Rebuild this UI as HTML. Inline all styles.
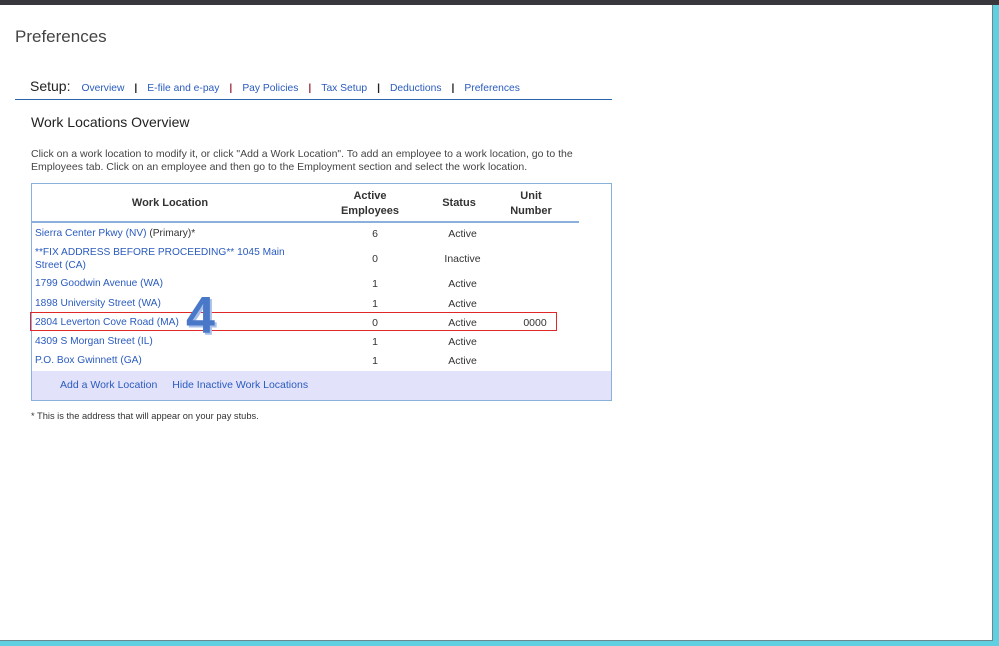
<!DOCTYPE html>
<html><head><style>
body{margin:0;width:999px;height:646px;position:relative;background:#5fd0e0;font-family:"Liberation Sans",sans-serif;overflow:hidden}
#top{position:absolute;left:0;top:0;width:999px;height:5px;background:#38383c}
#page{position:absolute;left:0;top:5px;width:992px;height:635px;background:#fff;border-right:1px solid #6a8890;border-bottom:1px solid #6a8890}
.a{position:absolute;white-space:nowrap}
.lk{color:#2a5bbf}
.sep{color:#222;font-weight:bold;margin:0 10px}
.c{position:absolute;text-align:center;font-size:10.5px;color:#333}
.r{font-size:10.2px}
</style></head><body>
<div id="top"></div>
<div id="page">
<div class="a" style="left:15px;top:22px;font-size:17px;color:#444">Preferences</div>
<div class="a" style="left:30px;top:73px;font-size:10.3px"><span style="font-size:14px;color:#222;margin-right:11px">Setup:</span><span class="lk">Overview</span><span class="sep">|</span><span class="lk">E-file and e-pay</span><span class="sep" style="color:#a03040">|</span><span class="lk">Pay Policies</span><span class="sep" style="color:#a03040">|</span><span class="lk">Tax Setup</span><span class="sep">|</span><span class="lk">Deductions</span><span class="sep">|</span><span class="lk">Preferences</span></div>
<div class="a" style="left:15px;top:94px;width:597px;height:1px;background:#2a64a8"></div>
<div class="a" style="left:31px;top:109px;font-size:14px;color:#222">Work Locations Overview</div>
<div class="a" style="left:31px;top:143px;font-size:10.5px;color:#444;line-height:13px">Click on a work location to modify it, or click "Add a Work Location". To add an employee to a work location, go to the<br>Employees tab. Click on an employee and then go to the Employment section and select the work location.</div>
<div class="a" style="left:31px;top:178px;width:579px;height:216px;border:1px solid #8ab0dc"></div>
<div class="a" style="left:32px;top:216px;width:547px;height:2px;background:#8ab0dc"></div>
<div class="c" style="left:90px;width:160px;top:192px;font-size:11px;font-weight:bold">Work Location</div>
<div class="c" style="left:320px;width:100px;top:184px;font-size:11px;font-weight:bold;line-height:15px">Active<br>Employees</div>
<div class="c" style="left:420px;width:78px;top:192px;font-size:11px;font-weight:bold">Status</div>
<div class="c" style="left:495px;width:72px;top:184px;font-size:11px;font-weight:bold;line-height:15px">Unit<br>Number</div>
<div class="a" style="left:31px;top:308px;width:525px;height:17px;outline:1px solid #e02828"></div>
<div class="a lk r" style="left:35px;top:223px">Sierra Center Pkwy (NV) <span style="color:#333">(Primary)*</span></div>
<div class="a lk r" style="left:35px;top:241px;line-height:13px">**FIX ADDRESS BEFORE PROCEEDING** 1045 Main<br>Street (CA)</div>
<div class="a lk r" style="left:35px;top:273px">1799 Goodwin Avenue (WA)</div>
<div class="a lk r" style="left:35px;top:293px">1898 University Street (WA)</div>
<div class="a lk r" style="left:35px;top:312px">2804 Leverton Cove Road (MA)</div>
<div class="a lk r" style="left:35px;top:331px">4309 S Morgan Street (IL)</div>
<div class="a lk r" style="left:35px;top:350px">P.O. Box Gwinnett (GA)</div>
<div class="c" style="left:355px;width:40px;top:223px">6</div>
<div class="c" style="left:355px;width:40px;top:248px">0</div>
<div class="c" style="left:355px;width:40px;top:273px">1</div>
<div class="c" style="left:355px;width:40px;top:293px">1</div>
<div class="c" style="left:355px;width:40px;top:312px">0</div>
<div class="c" style="left:355px;width:40px;top:331px">1</div>
<div class="c" style="left:355px;width:40px;top:350px">1</div>
<div class="c" style="left:425px;width:75px;top:223px">Active</div>
<div class="c" style="left:425px;width:75px;top:248px">Inactive</div>
<div class="c" style="left:425px;width:75px;top:273px">Active</div>
<div class="c" style="left:425px;width:75px;top:293px">Active</div>
<div class="c" style="left:425px;width:75px;top:312px">Active</div>
<div class="c" style="left:425px;width:75px;top:331px">Active</div>
<div class="c" style="left:425px;width:75px;top:350px">Active</div>
<div class="c" style="left:505px;width:60px;top:312px">0000</div>
<div class="a" style="left:186px;top:281px;font-size:52px;font-weight:bold;color:#4a78c8;text-shadow:2px 2px 0 #a8c0e8">4</div>
<div class="a" style="left:32px;top:366px;width:579px;height:29px;background:#e2e2fa"></div>
<div class="a lk" style="left:60px;top:374px;font-size:10.5px">Add a Work Location<span style="display:inline-block;width:15px"></span>Hide Inactive Work Locations</div>
<div class="a" style="left:31px;top:406px;font-size:9.3px;color:#333">* This is the address that will appear on your pay stubs.</div>
</div>
</body></html>
